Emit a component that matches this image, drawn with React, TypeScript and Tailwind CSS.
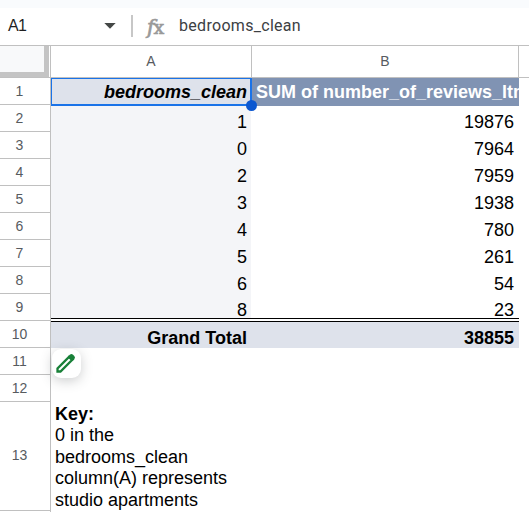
const rows: [string, string][] = [
  ["1", "19876"],
  ["0", "7964"],
  ["2", "7959"],
  ["3", "1938"],
  ["4", "780"],
  ["5", "261"],
  ["6", "54"],
  ["8", "23"],
];

const keyLines = ["0 in the", "bedrooms_clean", "column(A) represents", "studio apartments"];

function FormulaBar() {
  return (
    <div className="flex h-[38px] shrink-0 items-center border-b border-[#c0c0c0] bg-white pb-[1px]">
      <div className="w-[104px] pl-2 text-[16px] leading-5 tracking-[-0.6px] text-[#1f1f1f]">A1</div>
      <svg width="12" height="6" viewBox="0 0 12 6">
        <path d="M0.3 0h11.4L6 5.8z" fill="#444746" />
      </svg>
      <div className="ml-[15px] h-[22px] w-[2px] bg-[#c7c7c7]" />
      <div className="ml-[14px] flex w-[32px] items-baseline pt-[2px] text-[#999999]">
        <span className="font-['DejaVu_Serif',serif] text-[20px] leading-5 italic [-webkit-text-stroke:0.7px_#999999]">f</span>
        <span className="-ml-[1px] font-['DejaVu_Serif',serif] text-[19px] leading-5 [-webkit-text-stroke:0.7px_#999999]">x</span>
      </div>
      <div className="font-[Roboto,sans-serif] text-[16px] leading-5 tracking-[0.3px] text-[#3c4043]">bedrooms_clean</div>
    </div>
  );
}

function RowHeaders() {
  return (
    <div className="w-[51px] shrink-0 border-r border-[#c0c0c0] text-center text-[14px] text-[#575b5f]">
      <div className="h-8 border-b border-[#c0c0c0]">
        <div className="h-[31px] w-[49px] border-r-[5px] border-b-[5px] border-[#c4c4c4] bg-[#f8f9fa]" />
      </div>
      {Array.from({ length: 13 }, (_, i) => (
        <div
          key={i}
          className={`flex items-center justify-center border-b border-[#c0c0c0] pr-[11px] ${i === 12 ? "h-[109px] pb-[2px]" : "h-[27px]"}`}
        >
          {i + 1}
        </div>
      ))}
    </div>
  );
}

export default function App() {
  return (
    <div className="flex h-[512px] w-[529px] flex-col overflow-hidden bg-white font-['Liberation_Sans',Arial,sans-serif] text-black">
      <div className="h-2 shrink-0 bg-[#f9fbfd]" />
      <FormulaBar />
      <div className="flex min-h-0 flex-1">
        <RowHeaders />
        <div className="min-w-0 flex-1">
          <div className="flex h-8 border-b border-[#c0c0c0] text-[14px] text-[#575b5f]">
            <div className="flex w-[201px] items-center justify-center border-r border-[#c0c0c0]">A</div>
            <div className="flex w-[267px] items-center justify-center border-r border-[#c0c0c0]">B</div>
          </div>
          <div className="flex h-7 text-[18px] font-bold leading-[27px]">
            <div className="relative h-7 w-[201px] border-2 border-t-1 border-l-1 border-[#1a73e8] bg-[#dee2eb] pr-[3px] text-right italic">
              bedrooms_clean
              <div className="absolute -right-[7px] -bottom-[7px] size-[11px] rounded-full bg-[#0b57d0]" />
            </div>
            <div className="w-[267px] overflow-hidden bg-[#8093b3] pl-1 leading-[28px] whitespace-nowrap text-white">
              SUM of number_of_reviews_ltm
            </div>
          </div>
          <div className="h-[213px] w-[468px] border-b border-black text-right text-[18px] leading-[27px]">
            <div className="flex h-full">
              <div className="w-[200px] bg-[#f4f5f8] pt-[3px] pr-1">
                {rows.map(([name]) => (
                  <div key={name} className="h-[27px] last:-mt-px">{name}</div>
                ))}
              </div>
              <div className="flex-1 pt-[3px] pr-[5px]">
                {rows.map(([name, sum]) => (
                  <div key={name} className="h-[27px] last:-mt-px">{sum}</div>
                ))}
              </div>
            </div>
          </div>
          <div className="mt-[2px] flex h-[27px] w-[468px] border-t-1 border-black bg-[#dee2eb] pt-[3px] text-right text-[18px] font-bold leading-[27px]">
            <div className="w-[200px] pr-1">Grand Total</div>
            <div className="flex-1 pr-[5px]">38855</div>
          </div>
          <div className="h-[54px] pt-px pl-px">
            <div className="flex size-[29px] items-center justify-center rounded-[9px] bg-white shadow-[0_3px_12px_rgba(60,64,67,0.25)]">
              <svg width="20" height="20" viewBox="0 0 20 20" className="-mt-[2px] -ml-[1px]">
                <path d="M1.5 18.5v-3L13 4l3 3L4.5 18.5z" fill="none" stroke="#188038" strokeWidth="2.3" />
                <path d="m12 3.5 1.8-1.8q1.7-1.4 3.2 0l1.3 1.3q1.4 1.5 0 3.2L16.5 8z" fill="#188038" />
              </svg>
            </div>
          </div>
          <div className="pt-[2px] pl-1 text-[18px] leading-[21.4px]">
            <div className="font-bold">Key:</div>
            {keyLines.map((line) => (
              <div key={line}>{line}</div>
            ))}
          </div>
        </div>
      </div>
    </div>
  );
}
